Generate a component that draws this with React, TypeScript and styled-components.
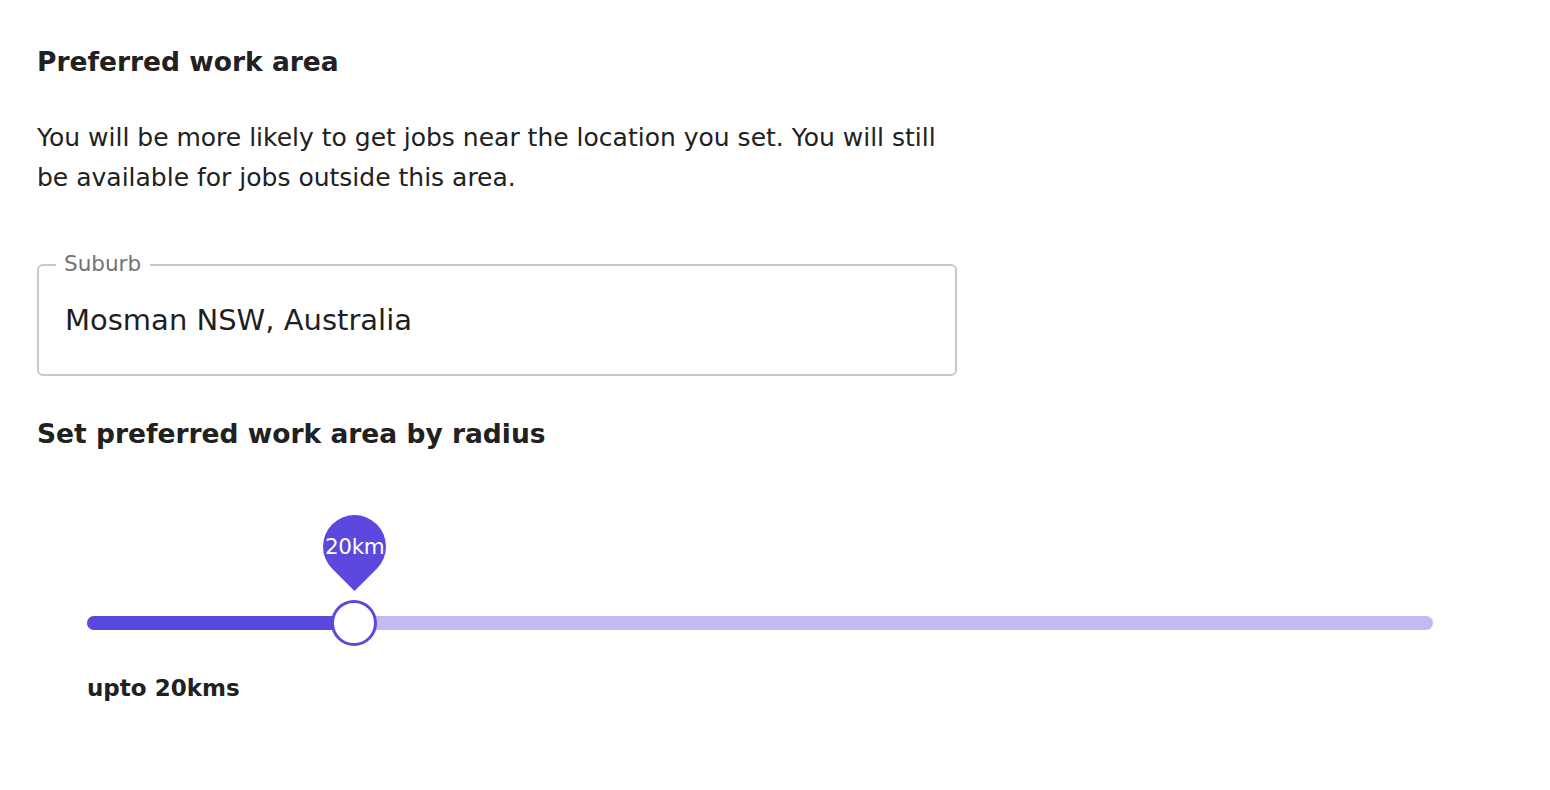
import React from "react";
import styled, { createGlobalStyle } from "styled-components";

const Global = createGlobalStyle`
  html, body { margin: 0; padding: 0; background: #fff; }
  body { font-family: "DejaVu Sans", "Open Sans", sans-serif; color: #212121; }
  * { box-sizing: border-box; }
`;

const Page = styled.div`
  padding: 42px 37px 0 37px;
  width: 1550px;
  height: 790px;
`;

const Section = styled.div`
  width: 905px;
  display: flex;
  flex-direction: column;
`;

const Title = styled.h2`
  margin: 0;
  font-size: 26.5px;
  font-weight: 700;
  line-height: 40px;
`;

const Description = styled.p`
  margin: 36px 0 0 0;
  font-size: 25px;
  line-height: 40px;
  font-weight: 400;
`;

const Field = styled.div`
  position: relative;
  margin-top: 66px;
  height: 112px;
  border: 2px solid #c8c8c8;
  border-radius: 6px;
  display: flex;
  align-items: center;
  padding: 0 26px;
  width: 920px;
`;

const Label = styled.span`
  position: absolute;
  top: -16px;
  left: 17px;
  padding: 0 9px 0 8px;
  background: #fff;
  font-size: 21.5px;
  color: #727272;
  line-height: 28px;
`;

const Value = styled.div`
  font-size: 29px;
  color: #1f1f1f;
`;

const SubTitle = styled.h3`
  margin: 38px 0 0 0;
  font-size: 26.5px;
  font-weight: 700;
  line-height: 40px;
  width: 1000px;
`;

const SliderBlock = styled.div`
  margin: 62px 0 0 50px;
  width: 1346px;
  display: flex;
  flex-direction: column;
`;

const SliderArea = styled.div`
  position: relative;
  height: 136px;
  display: flex;
  align-items: flex-end;
  padding-bottom: 22px;
`;

const Rail = styled.div`
  position: relative;
  width: 100%;
  height: 14px;
  border-radius: 7px;
  background: #c3baf1;
`;

const Fill = styled.div`
  position: absolute;
  left: 0;
  top: 0;
  bottom: 0;
  border-radius: 7px;
  background: #5b48de;
`;

const Thumb = styled.div`
  position: absolute;
  top: 50%;
  width: 46px;
  height: 46px;
  margin: -23px 0 0 -23px;
  border-radius: 50%;
  background: #fff;
  border: 3px solid #5b48de;
`;

const Pin = styled.div`
  position: absolute;
  left: 50%;
  bottom: 65px;
  width: 63px;
  height: 63px;
  margin-left: -31.5px;
  border-radius: 50% 50% 50% 0;
  background: #5b48de;
  transform: rotate(-45deg);
  transform-origin: 50% 50%;
  display: flex;
  align-items: center;
  justify-content: center;
`;

const PinText = styled.span`
  transform: rotate(45deg);
  color: #fff;
  font-size: 21.5px;
  font-weight: 400;
  white-space: nowrap;
  letter-spacing: -0.3px;
`;

const Caption = styled.div`
  margin-top: 21px;
  font-size: 23px;
  font-weight: 700;
  line-height: 30px;
`;

export default function App() {
  const value = 20;
  const max = 100;
  const pct = (value / max) * 100 - 0.16;
  return (
    <>
      <Global />
      <Page>
        <Section>
          <Title>Preferred work area</Title>
          <Description>
            You will be more likely to get jobs near the location you set. You will still be available for jobs outside this area.
          </Description>
          <Field>
            <Label>Suburb</Label>
            <Value>Mosman NSW, Australia</Value>
          </Field>
          <SubTitle>Set preferred work area by radius</SubTitle>
        </Section>
        <SliderBlock>
          <SliderArea>
            <Rail>
              <Fill style={{ width: `${pct}%` }} />
              <Thumb style={{ left: `${pct}%` }}>
                <Pin>
                  <PinText>{value}km</PinText>
                </Pin>
              </Thumb>
            </Rail>
          </SliderArea>
          <Caption>upto {value}kms</Caption>
        </SliderBlock>
      </Page>
    </>
  );
}
